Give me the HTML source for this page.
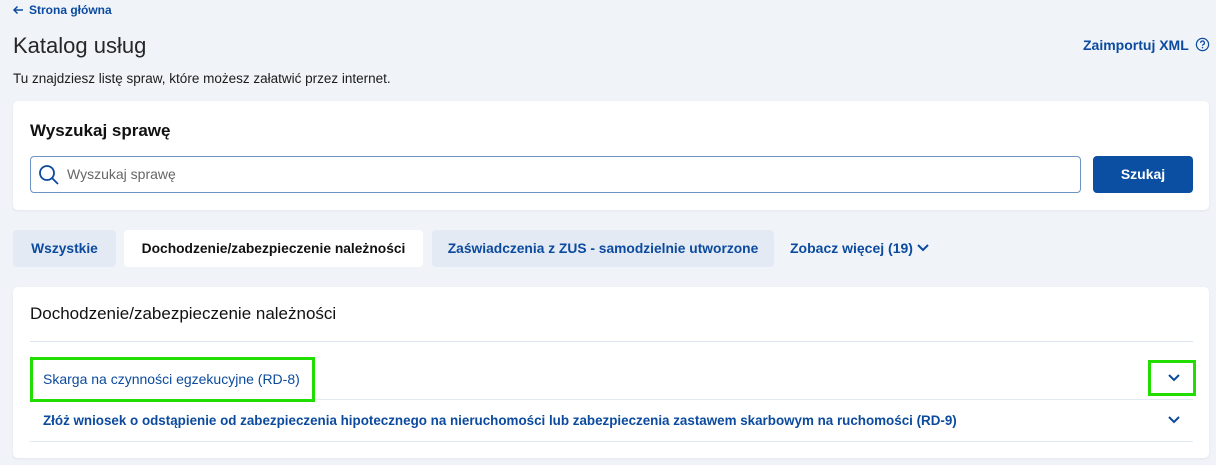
<!DOCTYPE html>
<html><head><meta charset="utf-8"><style>
*{box-sizing:border-box;margin:0;padding:0}
body{width:1216px;height:465px;background:#f0f4f9;font-family:"Liberation Sans",sans-serif;color:#1b1b1b;position:relative;overflow:hidden}
.a{position:absolute}
.link{color:#0b4a9e;font-weight:bold}
.card{position:absolute;background:#fff;border-radius:5px;box-shadow:0 1px 3px rgba(0,0,0,.06)}
.tab{position:absolute;top:230px;height:37px;border-radius:4px;font-size:13.8px;font-weight:bold;line-height:37px;text-align:center;color:#0b4a9e;background:#e3eaf3}
</style></head><body>
<svg class="a" style="left:12px;top:5px" width="12" height="10" viewBox="0 0 12 10"><path d="M11 5H2M5.5 1.5L2 5l3.5 3.5" fill="none" stroke="#0b4a9e" stroke-width="1.5"/></svg>
<div class="a link" style="left:29px;top:3px;font-size:12px">Strona główna</div>
<div class="a" style="left:13px;top:33px;font-size:22px;color:#262626">Katalog usług</div>
<div class="a link" style="left:1083px;top:37px;font-size:14px">Zaimportuj XML</div>
<svg class="a" style="left:1195px;top:37px" width="15" height="15" viewBox="0 0 16 16"><circle cx="8" cy="8" r="6.5" fill="none" stroke="#0b4a9e" stroke-width="1.3"/><path d="M6 6.3a2 2 0 1 1 2.6 1.9c-.5.2-.6.5-.6 1.1" fill="none" stroke="#0b4a9e" stroke-width="1.3"/><circle cx="8" cy="11.3" r=".8" fill="#0b4a9e"/></svg>
<div class="a" style="left:13px;top:71px;font-size:13.5px">Tu znajdziesz listę spraw, które możesz załatwić przez internet.</div>
<div class="card" style="left:13px;top:101px;width:1196px;height:109px">
<div class="a" style="left:17px;top:20px;font-size:17px;font-weight:bold;color:#111">Wyszukaj sprawę</div>
<div class="a" style="left:17px;top:55px;width:1051px;height:37px;border:1px solid #6d92c4;border-radius:4px"></div>
<svg class="a" style="left:25px;top:63px" width="22" height="22" viewBox="0 0 22 22"><circle cx="9" cy="9" r="7" fill="none" stroke="#0b4a9e" stroke-width="1.8"/><path d="M14 14l6 6" stroke="#0b4a9e" stroke-width="1.8"/></svg>
<div class="a" style="left:54px;top:65px;font-size:14px;color:#666">Wyszukaj sprawę</div>
<div class="a" style="left:1080px;top:55px;width:100px;height:37px;background:#0b4fa3;border-radius:4px;color:#fff;font-weight:bold;font-size:14px;line-height:37px;text-align:center">Szukaj</div>
</div>
<div class="tab" style="left:13px;width:103px">Wszystkie</div>
<div class="tab" style="left:124px;width:299px;background:#fff;color:#111">Dochodzenie/zabezpieczenie należności</div>
<div class="tab" style="left:432px;width:342px">Zaświadczenia z ZUS - samodzielnie utworzone</div>
<div class="a link" style="left:790px;top:240px;font-size:14px">Zobacz więcej (19)</div>
<svg class="a" style="left:916px;top:242px" width="14" height="12" viewBox="0 0 14 12"><path d="M2 3l5 5 5-5" fill="none" stroke="#0b4a9e" stroke-width="2"/></svg>
<div class="card" style="left:13px;top:287px;width:1196px;height:171px">
<div class="a" style="left:17px;top:17px;font-size:17px;color:#111">Dochodzenie/zabezpieczenie należności</div>
<div class="a" style="left:17px;top:54px;width:1163px;height:1px;background:#dbe3ee"></div>
<div class="a" style="left:30px;top:84px;font-size:14px;color:#0b4a9e">Skarga na czynności egzekucyjne (RD-8)</div>
<div class="a" style="left:17px;top:112px;width:1163px;height:1px;background:#e3e9f1"></div>
<div class="a link" style="left:30px;top:126px;font-size:13.4px">Złóż wniosek o odstąpienie od zabezpieczenia hipotecznego na nieruchomości lub zabezpieczenia zastawem skarbowym na ruchomości (RD-9)</div>
<div class="a" style="left:17px;top:154px;width:1163px;height:1px;background:#e3e9f1"></div>
<svg class="a" style="left:1154px;top:85px" width="14" height="12" viewBox="0 0 14 12"><path d="M2 3l5 5 5-5" fill="none" stroke="#0b4a9e" stroke-width="2"/></svg>
<svg class="a" style="left:1154px;top:127px" width="14" height="12" viewBox="0 0 14 12"><path d="M2 3l5 5 5-5" fill="none" stroke="#0b4a9e" stroke-width="2"/></svg>
</div>
<div class="a" style="left:30px;top:357px;width:285px;height:45px;border:3px solid #22dd00"></div>
<div class="a" style="left:1148px;top:360px;width:48px;height:36px;border:3px solid #22dd00"></div>
</body></html>
